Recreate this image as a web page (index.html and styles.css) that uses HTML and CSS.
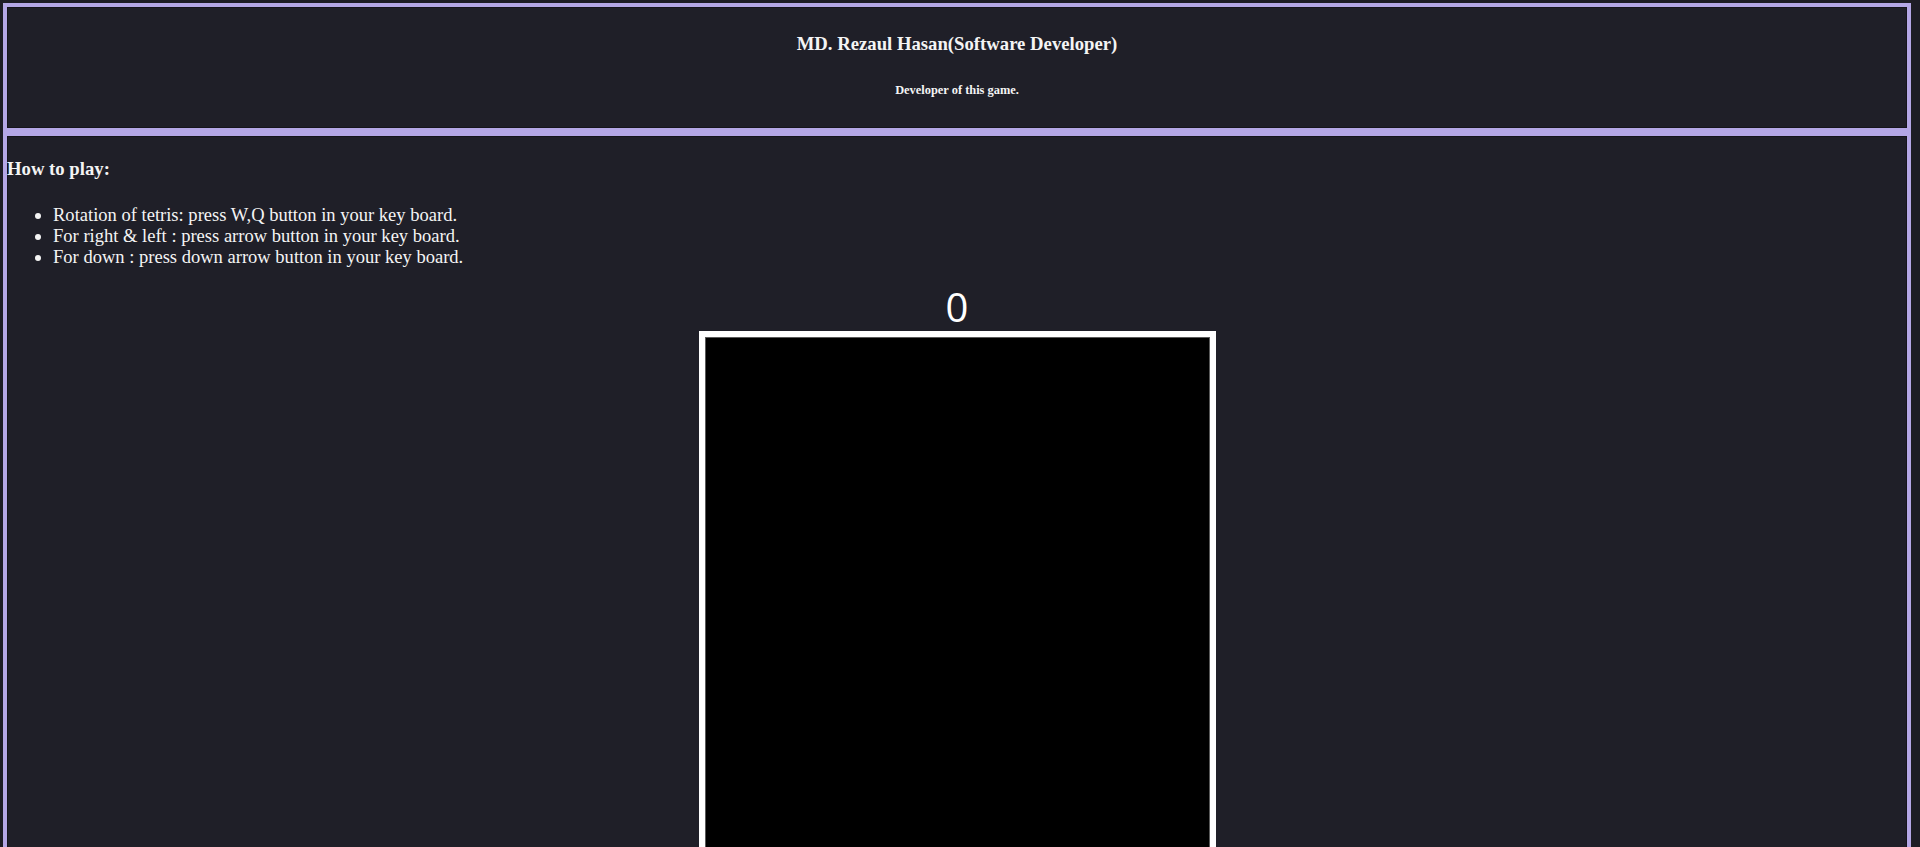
FILE: index.html
```html
<!DOCTYPE html>
<html lang="en">
<head>
<meta charset="utf-8">
<title>Tetris</title>
<link rel="stylesheet" href="styles.css">
</head>
<body>
<div class="page">
  <header class="dev-header">
    <h3 class="dev-name">MD. Rezaul Hasan(Software Developer)</h3>
    <h6 class="dev-sub">Developer of this game.</h6>
  </header>
  <main class="game-area">
    <h3 class="howto-title">How to play:</h3>
    <ul class="howto-list">
      <li>Rotation of tetris: press W,Q button in your key board.</li>
      <li>For right &amp; left : press arrow button in your key board.</li>
      <li>For down : press down arrow button in your key board.</li>
    </ul>
    <div class="game">
      <div class="score">0</div>
      <div class="board"></div>
    </div>
  </main>
</div>
</body>
</html>
```

FILE: styles.css
```css
html, body {
  margin: 0;
  padding: 0;
  background: #1d1d25;
  overflow: hidden;
}
body {
  font-family: "Liberation Serif", "Times New Roman", serif;
  color: #f4f4f4;
}
.page {
  margin: 3px 9px 0 3px;
}
.dev-header {
  border: 4px solid #b4a7e6;
  box-shadow: inset 0 0 0 1px #15151b;
  background: #1f1f28;
  text-align: center;
}
.dev-name {
  font-size: 18.72px;
  font-weight: bold;
  margin: 26px 0 0;
  line-height: normal;
}
.dev-sub {
  font-size: 12.4px;
  font-weight: bold;
  margin: 28px 0 30px;
  line-height: normal;
}
.game-area {
  display: block;
  border: 4px solid #b4a7e6;
  border-bottom: none;
  box-shadow: inset 0 0 0 1px #15151b;
  background: #1f1f28;
  height: 900px;
}
.howto-title {
  font-size: 18.72px;
  font-weight: bold;
  margin: 22px 0 0;
  line-height: normal;
}
.howto-list {
  font-size: 18.55px;
  margin: 24px 0 0;
  padding-left: 46px;
  line-height: 21px;
}
.game {
  display: flex;
  flex-direction: column;
  align-items: center;
}
.score {
  font-family: "Open Sans", "Noto Sans", sans-serif;
  font-size: 40px;
  line-height: 40px;
  margin-top: 20px;
  margin-bottom: 4px;
  color: #ffffff;
}
.board {
  box-sizing: border-box;
  width: 517px;
  height: 700px;
  background: #000;
  border: 6px solid #ffffff;
  box-shadow: inset 0 0 0 1px #5a5a5a;
}
```
